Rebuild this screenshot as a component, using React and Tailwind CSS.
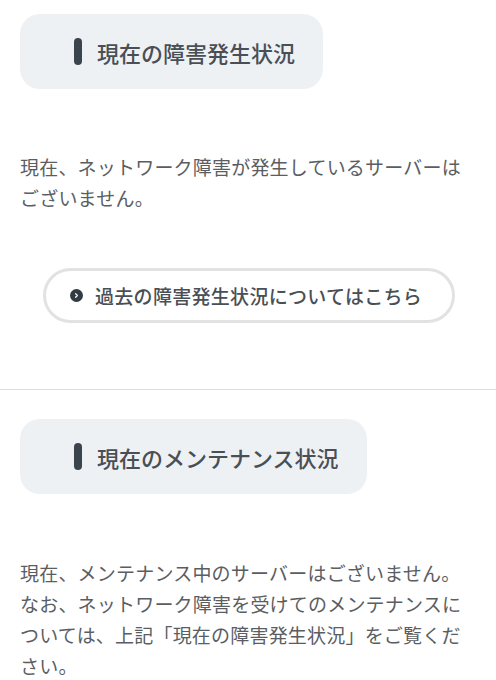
export default function App() {
  const jp = { fontFamily: '"Noto Sans CJK JP", "Noto Sans", sans-serif' };
  return (
    <div className="w-[496px] h-[680px] overflow-hidden bg-white" style={jp}>
      <div className="pt-[14px] px-5">
        <div className="inline-flex items-center h-[75px] rounded-[20px] bg-[#eef1f4] pl-[54px] pr-[28px]">
          <span className="w-[8px] h-[27px] rounded-full bg-[#3b444d] mr-[15px]" />
          <span className="text-[22px] leading-none font-medium text-[#4a4f55]">現在の障害発生状況</span>
        </div>
        <p className="mt-[62px] text-[19px] leading-[31px] tracking-[0.2px] text-[#5a5e63]">
          現在、ネットワーク障害が発生しているサーバーはございません。
        </p>
        <div className="mt-[55px] ml-[23px] w-[412px] h-[55px] rounded-full border-[3px] border-[#e2e2e2] flex items-center pl-[24px]">
          <span className="w-[13px] h-[13px] rounded-full bg-[#323b44] flex items-center justify-center mr-[12px]">
            <svg width="7" height="7" viewBox="0 0 8 8">
              <path d="M3 2l2 2-2 2" fill="none" stroke="#fff" strokeWidth="1.4" strokeLinecap="round" strokeLinejoin="round" />
            </svg>
          </span>
          <span className="text-[19px] leading-none font-medium tracking-[0.3px] text-[#4a4f55]">過去の障害発生状況についてはこちら</span>
        </div>
      </div>
      <div className="mt-[66px] h-px bg-[#dedede]" />
      <div className="pt-[29px] px-5">
        <div className="inline-flex items-center h-[75px] rounded-[20px] bg-[#eef1f4] pl-[54px] pr-[28px]">
          <span className="w-[8px] h-[27px] rounded-full bg-[#3b444d] mr-[15px]" />
          <span className="text-[22px] leading-none font-medium text-[#4a4f55]">現在のメンテナンス状況</span>
        </div>
        <p className="mt-[63px] text-[19px] leading-[31px] tracking-[0.2px] text-[#5a5e63] pr-[10px]">
          現在、メンテナンス中のサーバーはございません。なお、ネットワーク障害を受けてのメンテナンスについては、上記「現在の障害発生状況」をご覧ください。
        </p>
      </div>
    </div>
  );
}
